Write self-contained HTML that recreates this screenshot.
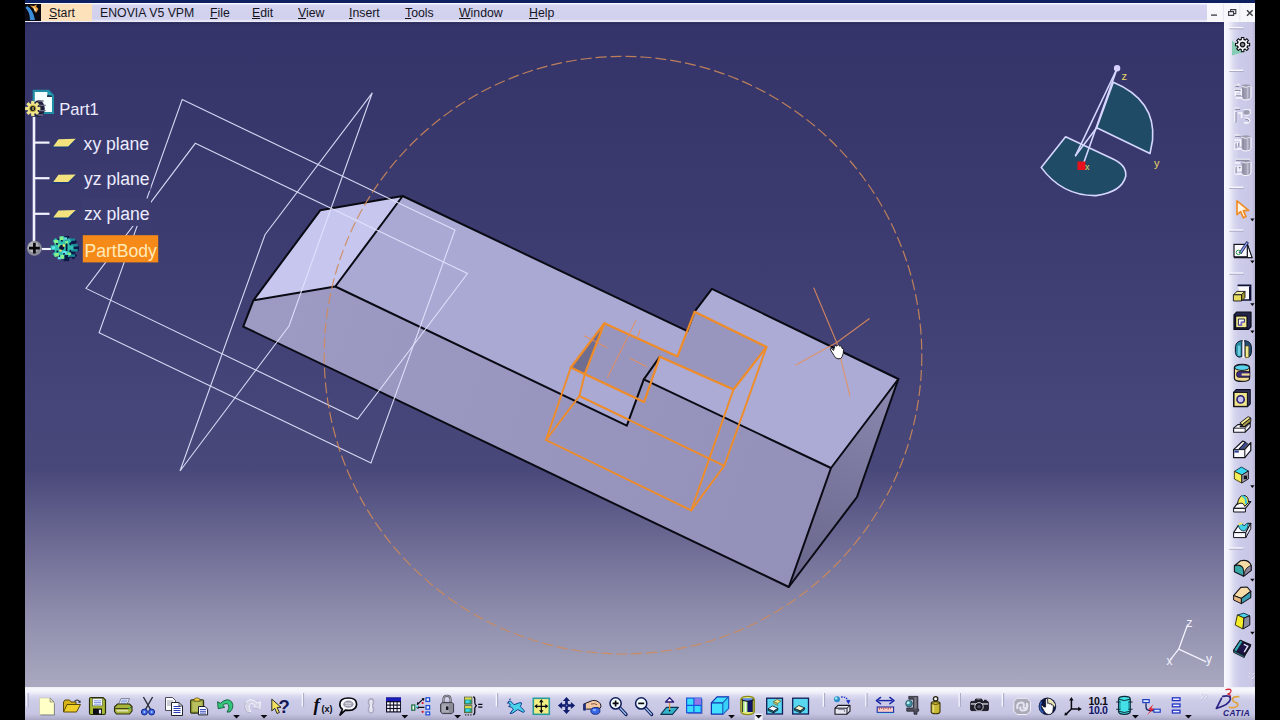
<!DOCTYPE html>
<html><head><meta charset="utf-8"><title>CATIA V5 - Part1</title>
<style>
html,body{margin:0;padding:0;background:#000;}
body{width:1280px;height:720px;position:relative;overflow:hidden;font-family:"Liberation Sans",sans-serif;}
#topstrip{position:absolute;left:25px;top:0;width:1230px;height:3px;background:#0f2060;}
#menubar{position:absolute;left:25px;top:3px;width:1230px;height:20px;background:linear-gradient(#f6f6ff 0,#f6f6ff 1px,#d4d4f0 2px,#d1d1ed 16px,#e8e8f6 18px,#f4f4fc 20px);box-sizing:border-box;}
#wc{position:absolute;left:1182px;top:0;width:48px;height:20px;background:#f7f7fc;}
#menubar .hl{position:absolute;left:16px;top:1px;width:51px;height:17px;background:#fde1ba;}
#menubar span{position:absolute;top:2px;font-size:12.3px;line-height:16px;color:#15151f;white-space:nowrap;}
#menubar u{text-decoration-thickness:1px;text-underline-offset:1px;}
svg{position:absolute;left:0;top:0;}
</style></head><body>
<div id="topstrip"></div>
<div id="menubar"><div class="hl"></div>
<span style="left:24px"><u>S</u>tart</span>
<span style="left:75px">ENOVIA V5 VPM</span>
<span style="left:185px"><u>F</u>ile</span>
<span style="left:227px"><u>E</u>dit</span>
<span style="left:273px"><u>V</u>iew</span>
<span style="left:324px"><u>I</u>nsert</span>
<span style="left:380px"><u>T</u>ools</span>
<span style="left:434px"><u>W</u>indow</span>
<span style="left:504px"><u>H</u>elp</span>
<div id="wc"></div>
</div>
<svg id="main" width="1280" height="720" viewBox="0 0 1280 720">
<defs>
<linearGradient id="bg" x1="0" y1="22" x2="0" y2="687" gradientUnits="userSpaceOnUse">
<stop offset="0" stop-color="#34346a"/>
<stop offset="0.3" stop-color="#3c3b6f"/>
<stop offset="0.568" stop-color="#464579"/>
<stop offset="0.674" stop-color="#49487a"/>
<stop offset="0.786" stop-color="#6e6c95"/>
<stop offset="0.895" stop-color="#8f8ead"/>
<stop offset="1" stop-color="#a9a9c0"/>
</linearGradient>
<linearGradient id="gfront" x1="243" y1="326" x2="830" y2="520" gradientUnits="userSpaceOnUse">
<stop offset="0" stop-color="#9d9bc4"/><stop offset="1" stop-color="#9391ba"/>
</linearGradient>
<linearGradient id="gright" x1="880" y1="390" x2="800" y2="580" gradientUnits="userSpaceOnUse">
<stop offset="0" stop-color="#8886ac"/><stop offset="1" stop-color="#69678c"/>
</linearGradient>
</defs>
<!-- viewport -->
<rect x="25" y="22" width="1199" height="665" fill="url(#bg)"/>
<g id="model" stroke-linejoin="round" stroke-linecap="round">
<!-- front face -->
<polygon points="243.2,326.6 253.4,300.3 335.3,286.5 626.8,425.7 643.8,379.3 831,468 788.8,587" fill="url(#gfront)"/>
<!-- right face -->
<polygon points="898.4,379 831,468 788.8,587 857,497" fill="url(#gright)"/>
<!-- top low -->
<polygon points="402.7,196 687.4,331.2 694.6,311.7 711.9,288.8 760,320 700,400 643.8,379.3 626.8,425.7 335.3,286.5" fill="#a9a9d4"/>
<!-- top high -->
<polygon points="711.9,288.8 898.4,379 831,468 643.8,379.3 659.9,356.7 677.4,356.6 694.6,311.7" fill="#ababd6"/>
<!-- chamfer -->
<polygon points="320.2,210.3 402.7,196 335.3,286.5 253.4,300.3" fill="#c6c6ef"/>
<!-- pocket interior -->
<polygon points="604.3,323.3 677.4,356.6 659.9,356.7 644.1,402 585,373.3" fill="#9896be"/>
<polygon points="677.4,356.6 694.6,311.7 766.5,347 733.5,389.5 659.9,356.7" fill="#9896be"/>
<polygon points="604.3,323.3 585,373.3 570.8,367.5" fill="#6f6d90"/>
<!-- black edges -->
<g fill="none" stroke="#0a0a14" stroke-width="2">
<polyline points="402.7,196 687.4,331.2 694.6,311.7 711.9,288.8 898.4,379 857,497 788.8,587 243.2,326.6 253.4,300.3 320.2,210.3 402.7,196 335.3,286.5 253.4,300.3"/>
<polyline points="335.3,286.5 626.8,425.7 643.8,379.3 659.9,356.7"/>
<polyline points="643.8,379.3 831,468 898.4,379"/>
<line x1="831" y1="468" x2="788.8" y2="587"/>
</g>
</g>
<!-- reference planes -->
<g fill="none" stroke="#e4e4ff" stroke-width="1.1" opacity="0.92">
<polygon points="182.2,99.5 455,230 371,463 99.1,332.7"/>
<polygon points="195.3,143.3 467.5,273.5 357.6,419 86,288.4"/>
<polygon points="372.3,92.8 265,234.7 180,471 289,326"/>
</g>
<!-- rotation circle -->
<circle cx="623" cy="355.2" r="298.8" fill="none" stroke="#d08a58" stroke-width="1.2" stroke-dasharray="11 4" opacity="0.88"/>
<!-- spec tree -->
<g id="tree">
<rect x="81" y="128" width="70.5" height="27.5" fill="#3a396d"/>
<rect x="81" y="163.2" width="69.5" height="27.5" fill="#3b3a6e"/>
<rect x="81" y="198.4" width="70" height="27.5" fill="#3d3c70"/>
<g stroke="#f2f2ff" fill="none">
<line x1="34" y1="117" x2="34" y2="242" stroke-width="2.6"/>
<line x1="35" y1="142.6" x2="49.5" y2="142.6" stroke-width="2.2"/>
<line x1="35" y1="178.2" x2="49.5" y2="178.2" stroke-width="2.2"/>
<line x1="35" y1="213.8" x2="49.5" y2="213.8" stroke-width="2.2"/>
<line x1="42" y1="249" x2="51" y2="249" stroke-width="2.1"/>
</g>
<g id="pl">
<polygon points="58,139.4 76.4,139 68.8,148 51.4,148" fill="#1c3a78"/>
<polygon points="58.4,139.2 75.8,138.8 68.2,146.4 53.2,146.4" fill="#f3e27e"/>
</g>
<use href="#pl" y="35.6"/>
<use href="#pl" y="71.2"/>
<!-- Part1 icon -->
<g>
<path d="M32.6,89.8 L49,89.8 L54,95 L54,114 L32.6,114 Z" fill="#1f8ea4"/>
<path d="M34.8,92 L47.4,92 L47.4,96.6 L52,96.6 L52,112 L34.8,112 Z" fill="#f4feff"/>
<path d="M47,95.4 H52 V96.8 H47 Z" fill="#101028"/>
<path d="M47.6,91.6 L52.4,96.2 L49.6,94.8 Z" fill="#3cc4dc"/>
<ellipse cx="38.6" cy="108.6" rx="6.2" ry="8.4" fill="#1e1e3c"/>
<path d="M38,101 H43.6 M39,105.4 H45.6 M39,110.6 H45.6 M38,115 H43" stroke="#6c6c84" stroke-width="1.4"/>
<g transform="translate(32.75,108.5)">
<g fill="#efe48c">
<rect x="-1.6" y="-7.6" width="3.2" height="15.2"/>
<rect x="-7.6" y="-1.6" width="15.2" height="3.2"/>
<rect x="-1.6" y="-7.6" width="3.2" height="15.2" transform="rotate(45)"/>
<rect x="-1.6" y="-7.6" width="3.2" height="15.2" transform="rotate(-45)"/>
<circle r="5.2"/>
</g>
<circle r="3.5" fill="#b8a838"/>
<circle r="2.5" fill="#14142c"/>
<rect x="-0.6" y="-1.6" width="1.8" height="3.2" fill="#9c9040"/>
</g>
</g>
<!-- plus -->
<circle cx="34.4" cy="248.2" r="7.5" fill="#8c8c98"/>
<circle cx="33.4" cy="247" r="5.4" fill="#c4c4cc" opacity="0.7"/>
<path d="M29,248.2 H39.8 M34.4,242.8 V253.6" stroke="#06060a" stroke-width="2.7" fill="none"/>
<!-- partbody gear -->
<g transform="translate(64.1,248)">
<g fill="#0c1a48" transform="translate(2.2,0.6)">
<circle r="9.8"/>
<rect x="-2.8" y="-12.6" width="5.6" height="25.2"/>
<rect x="-12.6" y="-2.8" width="25.2" height="5.6"/>
<rect x="-2.8" y="-12.6" width="5.6" height="25.2" transform="rotate(45)"/>
<rect x="-2.8" y="-12.6" width="5.6" height="25.2" transform="rotate(-45)"/>
</g>
<g fill="#1a8a98"><rect x="5" y="-9.6" width="6" height="2.4"/><rect x="7" y="-4" width="6.6" height="2.6"/><rect x="7" y="1" width="6.6" height="2.6"/><rect x="5" y="6.4" width="6" height="2.4"/></g>
<g fill="#2fc0b0" transform="translate(-2,-0.4)">
<circle r="8"/>
<rect x="-2.2" y="-11.4" width="4.4" height="22.8"/>
<rect x="-11.4" y="-2.2" width="22.8" height="4.4"/>
<rect x="-2.2" y="-11.4" width="4.4" height="22.8" transform="rotate(45)"/>
<rect x="-2.2" y="-11.4" width="4.4" height="22.8" transform="rotate(-45)"/>
</g>
<g fill="#86f08c"><rect x="-10" y="-8" width="4" height="3.4"/><rect x="-4.6" y="-11.4" width="4" height="3.4"/><rect x="-9.6" y="5" width="4.4" height="3.6"/><rect x="-6" y="-3.6" width="3" height="3"/><rect x="-3.6" y="7" width="3.6" height="3.6"/><rect x="1" y="-7" width="3" height="2.6"/><rect x="3.4" y="4.6" width="3.4" height="2.4"/></g>
<g fill="#64e4f0"><rect x="-1.6" y="3" width="4.4" height="3.4"/><rect x="-12" y="-1.6" width="3" height="3"/><rect x="0" y="-10.6" width="3" height="2.4"/><rect x="-6.4" y="9" width="3" height="2.4"/></g>
<g fill="#0c1438"><circle cx="-2.4" cy="-0.6" r="2.5"/><rect x="1.6" y="-4.4" width="1.8" height="7.6"/><rect x="-8" y="-5" width="1.8" height="1.8"/><rect x="-7.6" y="2.6" width="1.8" height="1.8"/><rect x="-1" y="5" width="1.8" height="1.6"/><rect x="2.4" y="7" width="1.6" height="1.6"/><rect x="-3" y="-8" width="1.6" height="1.6"/></g>
<rect x="-1.4" y="-3.8" width="2.2" height="2.6" fill="#e8e060"/><rect x="-4.8" y="1.6" width="2.4" height="2" fill="#e8e060"/>
</g>
<!-- PartBody highlight -->
<rect x="82.8" y="235.2" width="75.4" height="27.2" fill="#f58a18"/>
<g font-family="Liberation Sans, sans-serif" font-size="17.6" fill="#ececff">
<text x="59.2" y="115" font-size="16.6">Part1</text>
<text x="83.6" y="150">xy plane</text>
<text x="84" y="185.2">yz plane</text>
<text x="84" y="220.4">zx plane</text>
<text x="84.4" y="256.6" fill="#ffe9b8">PartBody</text>
</g>
</g>
<!-- pocket highlight -->
<g fill="none" stroke="#f08c28" stroke-linecap="round" stroke-linejoin="round">
<g stroke-width="2.2">
<polyline points="604.3,323.3 677.4,356.6 694.6,311.7 766.5,347 733.5,389.5 659.9,356.7 644.1,402 570.8,367.5 604.3,323.3"/>
<line x1="604.3" y1="323.3" x2="585" y2="373.3"/>
</g>
<g stroke-width="1.9">
<polyline points="585,373.3 579.4,396 546,440 691.2,510.4 724.3,465.8 579.4,396"/>
<line x1="570.8" y1="367.5" x2="546" y2="440"/>
<line x1="733.5" y1="389.5" x2="691.2" y2="510.4"/>
<line x1="766.5" y1="347" x2="724.3" y2="465.8"/>
<line x1="579.4" y1="396" x2="628.5" y2="419.5"/>
</g>
<g stroke-width="1.1" opacity="0.85" stroke="#e8905a">
<line x1="584.2" y1="335.8" x2="606.7" y2="347.5"/>
<line x1="635.8" y1="320.8" x2="607.5" y2="377.5"/>
<line x1="630" y1="358.3" x2="646.7" y2="366.7"/>
<line x1="640" y1="330" x2="638" y2="337"/>
<polyline points="813.8,288 836.7,342.5 850,395.8"/>
<polyline points="795.8,365 836.7,342.5 869.2,318.7"/>
</g>
</g>
<!-- hand cursor -->
<g transform="translate(830,344)">
<path d="M3.5,6.5 L1,4.2 Q-0.3,4.6 0.6,6 L3.8,11.2 Q5.2,14.6 8,14.8 L10.6,14.6 Q12.6,13 13.2,9.5 L13.6,5.2 Q13.2,3.6 12,4.4 L11.6,2.4 Q10.6,1.2 9.8,2.4 L9.4,1.4 Q8.2,0.2 7.4,1.6 L7,2.2 Q5.6,0.6 4.8,2.2 Z" fill="#fff" stroke="#111" stroke-width="0.9" stroke-linejoin="round"/>
</g>
<!-- compass -->
<g stroke="#d6d6ff" stroke-width="1.6" stroke-linejoin="round" stroke-linecap="round">
<path d="M1065.6,136.7 L1113,159 Q1126.5,165 1125.8,176 Q1122,192 1096,195.6 Q1062,196 1041.2,167.4 Z" fill="#1f4b67"/>
<path d="M1113.3,82.2 Q1156,100 1152.6,140 L1150,153.5 L1096.7,127.8 Z" fill="#1f4b67"/>
<line x1="1117.1" y1="68.5" x2="1075.6" y2="155.6" />
<line x1="1117.1" y1="68.5" x2="1083.5" y2="163.5"/>
<line x1="1096.7" y1="127.8" x2="1075.6" y2="155.6"/>
</g>
<circle cx="1117.1" cy="68.3" r="3.2" fill="#d8d0ff"/>
<rect x="1077.5" y="161.5" width="8" height="8.5" fill="#e8101c"/>
<text x="1121.5" y="79.5" font-size="11" fill="#e6d860" font-family="Liberation Sans, sans-serif">z</text>
<text x="1154" y="166.5" font-size="11" fill="#e6d860" font-family="Liberation Sans, sans-serif">y</text>
<text x="1085" y="169.5" font-size="9" fill="#e6d860" font-family="Liberation Sans, sans-serif">x</text>
<!-- small axis -->
<g stroke="#f2f2ff" stroke-width="1.3" stroke-linecap="round">
<line x1="1178.7" y1="649.2" x2="1187.5" y2="625"/>
<line x1="1178.7" y1="649.2" x2="1205.8" y2="661.7"/>
<line x1="1178.7" y1="649.2" x2="1170.8" y2="659.2"/>
</g>
<g font-size="12" fill="#f2f2ff" font-family="Liberation Sans, sans-serif">
<text x="1186.5" y="627">z</text>
<text x="1206" y="663">y</text>
<text x="1166.5" y="665">x</text>
</g>
<!-- window controls -->
<g stroke="#3a3a44" fill="none" stroke-width="1.3">
<path d="M1211,15.1 H1217"/>
<path d="M1228.6,11.6 H1233.6 V15.4 H1228.6 Z M1230.6,11.4 V9.6 H1235.8 V13.6 H1233.8" stroke-width="1.1"/>
<path d="M1247,10.2 L1252.6,15.8 M1252.6,10.2 L1247,15.8" stroke-width="1.4"/>
</g>
<path d="M1223.5,4 V21 M1239.8,4 V21" stroke="#e6e6f0" stroke-width="1"/>
<rect x="25" y="23" width="1199" height="1.2" fill="#2c2c58" opacity="0.8"/>
<!-- app icon -->
<g>
<rect x="25" y="4" width="16" height="17" fill="#0a0a10"/>
<path d="M27,6 Q33,9 35,20 L30,20 Q30,12 25.6,8 Z" fill="#3a8cd8"/>
<path d="M30,5.6 Q34,8 36,13 L38.4,9 L36,6.4 L37,4.6 L33.6,6 Z" fill="#f0a040"/>
<path d="M33,6.6 L36,9.6 L35,12 Z" fill="#fff0c0"/>
</g>

<!-- right toolbar -->
<defs>
<linearGradient id="tbr" x1="1224" y1="0" x2="1255" y2="0" gradientUnits="userSpaceOnUse">
<stop offset="0" stop-color="#f8f8fe"/><stop offset="0.16" stop-color="#f0f0fa"/><stop offset="0.34" stop-color="#d6d6ee"/><stop offset="0.5" stop-color="#ccccea"/><stop offset="0.9" stop-color="#c8c8e6"/><stop offset="1" stop-color="#b4b4d2"/>
</linearGradient>
<g id="grip"><rect x="1228.6" y="0" width="14.6" height="1.4" fill="#f8f8ff"/><rect x="1229.2" y="1.4" width="14.6" height="0.9" fill="#a8a8c6"/></g>
<path id="dr" d="M-2.2,-1.2 H2.2 L0,1.6 Z" fill="#0a0a10"/>
<g id="dis" >
<path d="M9,4.6 Q9,2.8 13.4,2.8 Q17.8,2.8 17.8,4.6 V16 Q17.8,18 13.4,18 Q9,18 9,16 Z" fill="#9c9cb0"/>
<path d="M9.4,5 Q13.4,7 17.4,5" fill="none" stroke="#f4f4fc" stroke-width="0.9"/>
<path d="M15,6.6 V17.4" stroke="#c0c0d2" stroke-width="1.8"/><path d="M10.6,6.6 V17.4" stroke="#8c8ca2" stroke-width="1.4"/>
<path d="M9,16 Q9,18.6 13.4,18.6 Q17.8,18.6 18.4,16 V5" fill="none" stroke="#f8f8ff" stroke-width="1"/>
</g>
</defs>
<rect x="1224" y="22" width="31" height="668" fill="url(#tbr)"/>
<use href="#grip" y="27"/><use href="#grip" y="69.6"/><use href="#grip" y="186.6"/><use href="#grip" y="229.4"/><use href="#grip" y="272.4"/><use href="#grip" y="547.4"/>
<!-- workbench gear -->
<polygon points="1232,40.6 1232,55.6 1245.4,51.4" fill="#86ccb4"/>
<g transform="translate(1242.6,44.6)">
<g fill="#0c0c12">
<circle r="6"/>
<rect x="-1.7" y="-7.6" width="3.4" height="15.2"/><rect x="-7.6" y="-1.7" width="15.2" height="3.4"/>
<rect x="-1.7" y="-7.6" width="3.4" height="15.2" transform="rotate(45)"/><rect x="-1.7" y="-7.6" width="3.4" height="15.2" transform="rotate(-45)"/>
</g>
<g fill="#f6f6fc"><circle r="4.6"/>
<rect x="-0.8" y="-6.5" width="1.6" height="13"/><rect x="-6.5" y="-0.8" width="13" height="1.6"/>
<rect x="-0.8" y="-6.5" width="1.6" height="13" transform="rotate(45)"/><rect x="-0.8" y="-6.5" width="1.6" height="13" transform="rotate(-45)"/></g>
<circle r="2.8" fill="#0c0c12"/><circle r="1.6" fill="#8c8c98"/>
</g>
<!-- disabled icons -->
<g transform="translate(1232.6,81.4)"><use href="#dis"/><path d="M2,4 H6 V2 M1.6,8 H8.6 V13.6 H2.6 V10.4 H7 M3,16.6 H10" fill="none" stroke="#f8f8ff" stroke-width="1.5"/><path d="M2.6,5 H6.6 M2.2,9 H8 M3.4,14.4 H8.6" fill="none" stroke="#8c8ca4" stroke-width="1.1"/></g>
<g transform="translate(1232.6,106)"><path d="M2,2.4 H7 M2.4,5 V16 M5.4,7 H9 V12 M11,4 H17 Q18.6,8 15,9 H12 M12,12 Q17,12 17,15 Q15.6,18 11.6,16.6" fill="none" stroke="#f8f8ff" stroke-width="1.6"/><path d="M2.6,3.4 H7.4 M3.4,6 V16.6 M11.4,5 H16.6 M12.6,13 Q16.4,13.4 16,15.6" fill="none" stroke="#8c8ca4" stroke-width="1.1"/><path d="M11,5 Q14,3.6 17,5 V8 Q14,9.6 11,8 Z" fill="#9c9cb0"/></g>
<g transform="translate(1232.6,132.4)"><use href="#dis"/><path d="M2,3 H8 M4,1.6 L5,5 M2,7.6 H8 V14 M2.4,10 V16.6 H9 M5,9.6 V13.6" fill="none" stroke="#f8f8ff" stroke-width="1.5"/><path d="M2.6,4 H8.4 M3.4,11 V16 M6,10.6 V14" fill="none" stroke="#8c8ca4" stroke-width="1.1"/></g>
<g transform="translate(1232.6,157)"><use href="#dis"/><path d="M3,2.4 H17 M2,6 H7.6 M2.6,9 V17 H9 M5.4,9.6 H8.4 V13.4 H5.4 Z" fill="none" stroke="#f8f8ff" stroke-width="1.5"/><path d="M3.4,3.4 H16.6 M3.4,10 V16.4 M6.2,10.4 H8" fill="none" stroke="#8c8ca4" stroke-width="1.1"/></g>
<!-- select arrow -->
<g transform="translate(1236,200)"><path d="M1,0.8 L1,14.6 L4.6,11.6 L7.4,17.8 L10,16.6 L7.4,10.6 L12.6,10.4 Z" fill="#fff4e4" stroke="#f08c28" stroke-width="1.7" stroke-linejoin="round"/></g>
<use href="#dr" x="1252.4" y="219.6"/>
<!-- sketch -->
<g transform="translate(1233,240)"><rect x="1" y="4.4" width="13.4" height="12.4" fill="#fafaff" stroke="#14141c" stroke-width="1.2"/><path d="M1,17.6 H19 L14.4,4.4" fill="none" stroke="#14141c" stroke-width="1.2"/><path d="M14.4,4.4 L19,17.6 H14.4 Z" fill="#fafaff" stroke="#14141c" stroke-width="1"/><path d="M6,13 L13.6,1.6 L15.4,2.8 L8,14" fill="#8c9ce8" stroke="#181c50" stroke-width="0.9"/><circle cx="5.4" cy="12.4" r="2.2" fill="none" stroke="#2c9c4c" stroke-width="1"/></g>
<use href="#dr" x="1252.4" y="261.6"/>
<!-- pad -->
<g transform="translate(1232.6,284.4)"><path d="M5,1 H18 V15.6 H9" fill="#fafaff" stroke="#101038" stroke-width="1.6"/><path d="M18,1 V15.6 H16.4 V2.6 Z" fill="#101038"/><path d="M0.8,10.4 L4.4,7 H12.4 L9,10.4 Z" fill="#f4ec9c" stroke="#14141c" stroke-width="0.9" stroke-linejoin="round"/><path d="M0.8,10.4 H9 V16.6 H0.8 Z" fill="#e8dc60" stroke="#14141c" stroke-width="0.9"/><path d="M9,10.4 L12.4,7 V13.2 L9,16.6 Z" fill="#a89c30" stroke="#14141c" stroke-width="0.9" stroke-linejoin="round"/></g>
<use href="#dr" x="1252.4" y="304.4"/>
<!-- pocket -->
<g transform="translate(1233,311.4)"><path d="M1,3.4 L3.6,0.8 H18 V15.4 L15.4,18 H1 Z" fill="#24244c" stroke="#0a0a18" stroke-width="1.2" stroke-linejoin="round"/><rect x="2.6" y="4.6" width="11.4" height="11.8" fill="#f0e890" stroke="#0a0a18" stroke-width="1.2"/><path d="M5.4,7.6 H11.4 V10.8 H8.4 V13.8 H5.4 Z" fill="#f8f8ff" stroke="#141440" stroke-width="0.9"/><path d="M5.4,13.8 H8.4 V10.8 H11.4" fill="none" stroke="#7c68c0" stroke-width="1.6"/></g>
<use href="#dr" x="1252.4" y="331.6"/>
<!-- shaft -->
<g transform="translate(1233.4,339.6)"><path d="M9.6,1 Q3,1 2,7 V13 Q2.4,17 5.6,17.6 L8.4,17 V2 Z" fill="#2c8ca8" stroke="#0c1c2c" stroke-width="1"/><path d="M10.4,1 Q17,1 18,7 V13 Q17.6,17 14.4,17.6 L11.6,17 V2 Z" fill="#284c74" stroke="#0c1c2c" stroke-width="1"/><rect x="12" y="6.4" width="3.4" height="11.6" fill="#f0e88c" stroke="#50480c" stroke-width="0.6"/><rect x="4.4" y="6" width="2.6" height="10" fill="#6cd0e0"/><path d="M10,0 V18.4" stroke="#f0f0fc" stroke-width="1.4"/></g>
<!-- groove -->
<g transform="translate(1233.6,363.6)"><path d="M0.8,4 Q0.8,0.8 8.4,0.8 Q16,0.8 16,4 V14.6 Q16,17.8 8.4,17.8 Q0.8,17.8 0.8,14.6 Z" fill="#f0dc8c" stroke="#141420" stroke-width="1.2"/><ellipse cx="8.4" cy="4" rx="7.2" ry="2.8" fill="#58d4ec" stroke="#141420" stroke-width="1"/><path d="M5,8 H16 V13.6 H5 Q3,13.6 3,10.8 Q3,8 5,8 Z" fill="#3c2c84" stroke="#141420" stroke-width="0.9"/><path d="M8,9.8 H16 V12 H8 Z" fill="#f0dc8c"/></g>
<!-- hole -->
<g transform="translate(1232.8,388.8)"><path d="M0.8,3.6 L3.4,0.8 H17.4 V15 L14.8,17.8 H0.8 Z" fill="#34345c" stroke="#0c0c20" stroke-width="1.1" stroke-linejoin="round"/><rect x="1.2" y="3.6" width="13.4" height="14" fill="#f0e48c" stroke="#14141c" stroke-width="1.1"/><circle cx="7.8" cy="10.6" r="3.6" fill="#c8c0f0" stroke="#241c6c" stroke-width="1.6"/></g>
<!-- rib -->
<g transform="translate(1232.8,415.6)"><path d="M7,7.4 L15.4,1 L18,2.4 L9.6,9 Z" fill="#f0e48c" stroke="#14141c" stroke-width="0.9" stroke-linejoin="round"/><path d="M9.6,9 L18,2.4 V6 L9.6,12.4 Z" fill="#a89c40" stroke="#14141c" stroke-width="0.9" stroke-linejoin="round"/><path d="M0.8,12.6 L5,9 H9.4 L7.4,11 H12.4 L17.4,6.6 V11.4 L12.4,16.6 H0.8 Z" fill="#fafaff" stroke="#14141c" stroke-width="1.1" stroke-linejoin="round"/><path d="M0.8,12.6 H12.4 V16.6 M12.4,12.6 L17.4,7.6" fill="none" stroke="#14141c" stroke-width="0.9"/></g>
<!-- slot -->
<g transform="translate(1232.8,440)"><path d="M0.8,9.6 L10,1 L12.6,2.4 L6.4,9 H12 L18,2.6 V10.4 L12,17.6 H0.8 Z" fill="#fafaff" stroke="#14141c" stroke-width="1.2" stroke-linejoin="round"/><path d="M6.4,9 L12.6,2.4 L15,3.8 L9.4,9.6 Z" fill="#3c4c9c" stroke="#14141c" stroke-width="0.8"/><path d="M0.8,9.6 H12 V17.6 M12,9.6 L18,2.6" fill="none" stroke="#14141c" stroke-width="1"/><path d="M1.6,10.4 H6 V12.6 H1.6 Z" fill="#2c3c8c"/></g>
<!-- solid combine -->
<g transform="translate(1233.4,466)"><path d="M1,5.4 L8,1 L15,5 L8.4,9 Z" fill="#38d8f0" stroke="#0c3048" stroke-width="0.9" stroke-linejoin="round"/><path d="M1,5.4 L8.4,9 V17 L1,13 Z" fill="#f4ec58" stroke="#3c3808" stroke-width="0.9" stroke-linejoin="round"/><path d="M8.4,9 L15,5 V13 L8.4,17 Z" fill="#9c9cac" stroke="#141420" stroke-width="0.9" stroke-linejoin="round"/><rect x="10.4" y="9.6" width="3.2" height="3.6" fill="#101018"/></g>
<use href="#dr" x="1252.4" y="486.4"/>
<!-- multi-sections solid -->
<g transform="translate(1232.8,494)"><path d="M0.8,14.4 L6,7.6 H18 L12.6,14.4 Z" fill="#fafaff" stroke="#14141c" stroke-width="1.1" stroke-linejoin="round"/><path d="M0.8,14.4 H12.6 V18 H0.8 Z" fill="#fafaff" stroke="#14141c" stroke-width="1"/><path d="M4.6,10.4 Q6,1 11,1.4 Q16,2 15.6,8.4 L12,12.4 Q10,7 4.6,10.4 Z" fill="#f4ec50" stroke="#14141c" stroke-width="1" stroke-linejoin="round"/><path d="M9,2 Q14,3 13,10" fill="none" stroke="#38c8e0" stroke-width="2"/></g>
<!-- removed multi-sections -->
<g transform="translate(1232.8,520.6)"><path d="M0.8,12 L5.4,5 H8 Q9,9 12,7.6 Q14.4,5.4 15,3 L18,2.6 L13,12 Z" fill="#fafaff" stroke="#14141c" stroke-width="1.1" stroke-linejoin="round"/><path d="M0.8,12 H13 V17 H0.8 Z" fill="#fafaff" stroke="#14141c" stroke-width="1"/><path d="M13,12 L18,2.6 V8 L13,17 Z" fill="#e4e4f0" stroke="#14141c" stroke-width="1" stroke-linejoin="round"/><path d="M5.6,5 Q7,1.6 9.6,3.4 Q11,7 13.6,3 L15.6,2.4 Q15,9 11.4,10.4 Q7,10.6 5.6,5 Z" fill="#44d0e4" stroke="#0c3c54" stroke-width="0.9"/><path d="M6,4.4 Q7.6,2 9.4,3.6" fill="none" stroke="#f4ec50" stroke-width="1.6"/></g>
<!-- fillet -->
<g transform="translate(1233.6,559.4)"><path d="M0.8,6.4 L7,1.4 Q15,-0.4 17.6,6 V11 L10,16.8 Z" fill="#f4dca4" stroke="#14141c" stroke-width="1.1" stroke-linejoin="round"/><path d="M0.8,6.4 Q6,4.6 9,8 Q10.6,11 10,16.8 L0.8,12.4 Z" fill="#38a8a8" stroke="#14141c" stroke-width="1.1" stroke-linejoin="round"/><path d="M10,16.8 Q11,8 17.6,6 V11 Z" fill="#8c8498" stroke="#14141c" stroke-width="0.9" stroke-linejoin="round"/></g>
<use href="#dr" x="1252.4" y="580"/>
<!-- chamfer -->
<g transform="translate(1232.8,586)"><path d="M0.8,9.6 L8,1.4 L14.4,1 L18,5.4 L8.6,12.4 Z" fill="#f8dca8" stroke="#14141c" stroke-width="1.1" stroke-linejoin="round"/><path d="M0.8,9.6 L8.6,12.4 V17.6 L0.8,14 Z" fill="#e8b880" stroke="#14141c" stroke-width="1" stroke-linejoin="round"/><path d="M8.6,12.4 L18,5.4 V11.6 L8.6,17.6 Z" fill="#3c9cb0" stroke="#14141c" stroke-width="1.1" stroke-linejoin="round"/></g>
<!-- draft -->
<g transform="translate(1234.4,612.4)"><path d="M3,2.6 L9.4,0.8 L15.4,3.4 L9.6,5.6 Z" fill="#48d0e8" stroke="#0c3048" stroke-width="0.9" stroke-linejoin="round"/><path d="M3,2.6 L9.6,5.6 L8.6,16.6 L0.8,12.6 Z" fill="#f4ec28" stroke="#3c3808" stroke-width="1" stroke-linejoin="round"/><path d="M9.6,5.6 L15.4,3.4 V12.6 L8.6,16.6 Z" fill="#8c8ca0" stroke="#141420" stroke-width="1" stroke-linejoin="round"/></g>
<use href="#dr" x="1252.4" y="633"/>
<!-- shell -->
<g transform="translate(1232.8,639.4)"><path d="M0.8,11 L7.4,1 L18,5.4 L11.4,16.4 Z" fill="#1c1444" stroke="#14141c" stroke-width="1.2" stroke-linejoin="round"/><path d="M0.8,11 L7.4,1 L10,2.2 L3.6,12.4 Z" fill="#34a8b4" stroke="#14141c" stroke-width="0.8"/><path d="M0.8,11 L11.4,16.4 L11.4,18.2 L0.8,13 Z" fill="#2c7c8c" stroke="#14141c" stroke-width="0.8"/><path d="M11,5 L15,6.8 L11.4,12.8" fill="none" stroke="#e8e8fc" stroke-width="1.3"/><path d="M11.4,16.4 L18,5.4 V7.4 L11.4,18.2 Z" fill="#14141c"/></g>
<!-- chevron down -->
<path d="M1249,673 L1251.8,675.8 L1254.6,673 M1249,676.4 L1251.8,679.2 L1254.6,676.4" fill="none" stroke="#f4f4ff" stroke-width="1"/>
<path d="M1249.4,673.6 L1252.2,676.4 L1255,673.6 M1249.4,677 L1252.2,679.8 L1255,677" fill="none" stroke="#a0a0bc" stroke-width="0.6"/>

<!-- bottom toolbar -->
<defs>
<linearGradient id="tbb" x1="0" y1="687" x2="0" y2="720" gradientUnits="userSpaceOnUse">
<stop offset="0" stop-color="#eeeef8"/><stop offset="0.06" stop-color="#f7f7fd"/><stop offset="0.16" stop-color="#f0f0fa"/><stop offset="0.27" stop-color="#dadaf0"/><stop offset="0.4" stop-color="#cdcde9"/><stop offset="0.8" stop-color="#c6c6e4"/><stop offset="0.9" stop-color="#b9b9d6"/><stop offset="1" stop-color="#a8a8c6"/>
</linearGradient>
<path id="dd" d="M-3.4,-1.8 H3.4 L0,1.8 Z" fill="#0a0a10"/>
<g id="sep"><rect x="-0.8" y="692.5" width="1.4" height="14" fill="#f6f6ff"/><rect x="0.6" y="693" width="1" height="14" fill="#a8a8c4"/></g>
</defs>
<rect x="25" y="687" width="1230" height="33" fill="url(#tbb)"/>
<g id="bicons">
<use href="#sep" x="27"/><use href="#sep" x="302.5"/><use href="#sep" x="496.5"/><use href="#sep" x="823.5"/><use href="#sep" x="866"/><use href="#sep" x="959.3"/><use href="#sep" x="1002.5"/>
<!-- new -->
<g transform="translate(39.5,698)"><path d="M1,1 H11 L15.5,5.5 V17.5 H1 Z" fill="#7a7a88"/><path d="M0,0 H10.5 L14.5,4 V16.5 H0 Z" fill="#ffffc8" stroke="#b8b8a0" stroke-width="0.5"/><path d="M10.5,0 V4 H14.5 Z" fill="#e8e8b0" stroke="#555" stroke-width="0.5"/></g>
<!-- open -->
<g transform="translate(63,698.5)"><path d="M0.5,13.5 V3.5 L2,1.5 H6.5 L8,3.5 H13 V6" fill="#d8b418" stroke="#5a4a08" stroke-width="1"/><path d="M0.5,13.5 L4,6 H17.5 L13.5,13.5 Z" fill="#f0d028" stroke="#5a4a08" stroke-width="1"/><path d="M11.5,3 Q14.5,0 16.5,3.2" fill="none" stroke="#20242c" stroke-width="1.1"/><path d="M15,3.8 L17.6,4.6 L17.4,1.8 Z" fill="#20242c"/></g>
<!-- save -->
<g transform="translate(89.5,697.5)"><path d="M0,1.5 Q0,0 1.5,0 H13.5 L16,2.5 V15.5 Q16,17 14.5,17 H1.5 Q0,17 0,15.5 Z" fill="#a9b834" stroke="#2a3008" stroke-width="1.2"/><rect x="3.2" y="1.2" width="9.6" height="7.2" fill="#f4f4ff" stroke="#404858" stroke-width="0.5"/><path d="M4.5,3.3 H11.5 M4.5,5 H11.5 M4.5,6.7 H11.5" stroke="#6a8ae0" stroke-width="0.8"/><rect x="3.5" y="11" width="9" height="6" fill="#0c0c14"/><rect x="9.4" y="12.2" width="2.2" height="3.8" fill="#e8e8f0"/></g>
<!-- print -->
<g transform="translate(114,698)"><path d="M4.5,6.5 L7,0.6 H15.5 L13,6.5 Z" fill="#f6f6ff" stroke="#50586a" stroke-width="0.7"/><path d="M7.5,2.2 H13.6 M6.9,3.7 H13 M6.3,5.2 H12.4" stroke="#6a8ae0" stroke-width="0.8"/><path d="M0.5,9 L3.5,6 H15.5 L18,8.5 V13 L15.5,16 H2.5 L0.5,13.5 Z" fill="#a8b43c" stroke="#2c3010" stroke-width="1.1"/><path d="M1,10.6 H15.4 L18,8.6" fill="none" stroke="#2c3010" stroke-width="0.9"/><rect x="2.6" y="11.8" width="11.6" height="1.7" fill="#e0e4b0"/><rect x="14.6" y="9.4" width="1.8" height="1.4" fill="#30d060"/></g>
<!-- cut -->
<g transform="translate(148,697)"><path d="M-4.6,0 L2.6,12.6 M4.6,0 L-2.6,12.6" stroke="#2c303c" stroke-width="1.4" fill="none"/><circle cx="-3.6" cy="15" r="3" fill="#3a66e0" stroke="#142a90" stroke-width="1"/><circle cx="3.6" cy="15" r="3" fill="#3a66e0" stroke="#142a90" stroke-width="1"/><circle cx="-3.6" cy="15" r="1" fill="#b0c4ff"/><circle cx="3.6" cy="15" r="1" fill="#b0c4ff"/></g>
<!-- copy -->
<g transform="translate(165,697)"><path d="M0.5,0.5 H7.5 L10.5,3.5 V13.5 H0.5 Z" fill="#fafaff" stroke="#383c48" stroke-width="0.9"/><path d="M2,4 H8 M2,6 H8 M2,8 H6" stroke="#8a8a98" stroke-width="0.8"/><path d="M6.5,5.5 H14 L17.5,9 V18.5 H6.5 Z" fill="#fafaff" stroke="#20242c" stroke-width="1"/><path d="M8.5,9.5 H15.5 M8.5,11.5 H15.5 M8.5,13.5 H15.5 M8.5,15.5 H15.5" stroke="#2a3cb8" stroke-width="1"/><path d="M14,5.5 V9 H17.5" fill="none" stroke="#20242c" stroke-width="0.7"/></g>
<!-- paste -->
<g transform="translate(190,697.5)"><rect x="0.6" y="2.2" width="13" height="13.4" rx="1.2" fill="#9aa43a" stroke="#2c3010" stroke-width="1.1"/><rect x="2.4" y="4.4" width="9.4" height="9.4" fill="#b8c060"/><path d="M4,2.6 Q4,0.4 7,0.4 Q10,0.4 10,2.6 V3.6 H4 Z" fill="#f0d040" stroke="#50440c" stroke-width="0.7"/><path d="M8.5,9 H15 L17.6,11.6 V17.4 H8.5 Z" fill="#fafaff" stroke="#181c30" stroke-width="1"/><path d="M10,12 H16 M10,13.8 H16 M10,15.6 H16" stroke="#2a3cb8" stroke-width="0.9"/></g>
<!-- undo -->
<g transform="translate(217,698.5)"><path d="M0.6,3.2 L1.2,10.2 L7.8,8.8 L5.6,7 Q9.4,3.4 11.6,6.6 Q13,9.6 10,13.6 L13,13.4 Q17.6,8.6 14.8,3.6 Q10.6,-1.6 3.4,4.8 Z" fill="#34c87c" stroke="#0c5838" stroke-width="0.9" stroke-linejoin="round"/></g>
<use href="#dd" x="236.5" y="716.8"/>
<!-- redo (disabled) -->
<g transform="translate(261,698.5) scale(-1,1)"><path d="M0.6,3.2 L1.2,10.2 L7.8,8.8 L5.6,7 Q9.4,3.4 11.6,6.6 Q13,9.6 10,13.6 L13,13.4 Q17.6,8.6 14.8,3.6 Q10.6,-1.6 3.4,4.8 Z" fill="#d4d4e6" stroke="#f6f6ff" stroke-width="1" stroke-linejoin="round"/><path d="M1.6,10.6 L8,9.2 M10.4,14 L13.4,13.8 Q18,8.8 15.2,4" fill="none" stroke="#a4a4bc" stroke-width="0.8"/></g>
<use href="#dd" x="264" y="716.8"/>
<!-- what's this -->
<g transform="translate(271,698.5)"><path d="M0.8,0.6 L0.8,12.4 L3.8,9.8 L6,15 L8.4,14 L6.2,9 L10,8.8 Z" fill="#f0e060" stroke="#181820" stroke-width="0.9" stroke-linejoin="round"/><text x="7.6" y="14.2" font-family="Liberation Sans, sans-serif" font-weight="bold" font-size="18.5" fill="#101858">?</text></g>
<!-- f(x) -->
<g transform="translate(313,697.5)" fill="#0a0a12" font-family="Liberation Serif, serif"><text x="0.6" y="13.4" font-size="18.5" font-style="italic" font-weight="bold">f</text><text x="8.6" y="14.4" font-size="9" font-family="Liberation Sans, sans-serif" font-weight="bold">(x)</text></g>
<!-- speech bubble -->
<g transform="translate(339,697)"><path d="M9.5,1 Q17.6,1 17.6,7.2 Q17.6,13 9.8,13.4 L6.4,13.2 L1,18 L3.4,12.2 Q0.8,10.6 0.8,7.2 Q0.8,1 9.5,1 Z" fill="#f8f8ff" stroke="#08080c" stroke-width="1.7" stroke-linejoin="round"/><ellipse cx="9.4" cy="7.2" rx="5.2" ry="3.6" fill="#9c9cac"/><path d="M6,6.2 H12.6 M6.4,8.2 H12.2" stroke="#f0f0f8" stroke-width="0.9"/></g>
<!-- chain disabled -->
<g transform="translate(371,699)" fill="none" stroke="#a8a8be" stroke-width="1.4"><ellipse cx="0" cy="3" rx="2.6" ry="3.2" fill="#e4e4f2"/><ellipse cx="0" cy="10.5" rx="2.6" ry="3.4" fill="#e4e4f2"/><path d="M0,5 V9" stroke="#f8f8ff" stroke-width="1.6"/></g>
<!-- design table -->
<g transform="translate(386,697.5)"><rect x="0" y="0" width="15" height="15" fill="#0c0c24"/><rect x="0" y="0" width="15" height="3.6" fill="#1a1ab8"/><g fill="#fafaff"><rect x="1.1" y="4.8" width="2.5" height="2.2"/><rect x="4.6" y="4.8" width="2.5" height="2.2"/><rect x="8.1" y="4.8" width="2.5" height="2.2"/><rect x="11.6" y="4.8" width="2.5" height="2.2"/><rect x="1.1" y="8.2" width="2.5" height="2.2"/><rect x="4.6" y="8.2" width="2.5" height="2.2"/><rect x="8.1" y="8.2" width="2.5" height="2.2"/><rect x="11.6" y="8.2" width="2.5" height="2.2"/><rect x="1.1" y="11.6" width="2.5" height="2.2"/><rect x="4.6" y="11.6" width="2.5" height="2.2"/><rect x="8.1" y="11.6" width="2.5" height="2.2"/><rect x="11.6" y="11.6" width="2.5" height="2.2"/></g></g>
<use href="#dd" x="404.8" y="716.8"/>
<!-- knowledge tree -->
<g transform="translate(411,697)"><g fill="#f4f8ff" stroke="#2050d8" stroke-width="1.3"><rect x="15" y="0.8" width="3.6" height="3.6"/><rect x="15" y="8.6" width="3.6" height="3.6"/><rect x="15" y="15" width="3.6" height="2.8"/></g><rect x="0.8" y="8" width="3" height="5.2" fill="#e8fff0" stroke="#186838" stroke-width="1.2"/><path d="M5,10.4 H13.4 M6,7.6 L12.6,1.6" stroke="#0a0a12" stroke-width="1.2" fill="none"/><path d="M5,10.4 L7.4,8.6 V12.2 Z M13.4,1 L13,4 L10.6,1.6 Z M6,7.6 L6.4,4.8 L8.6,7 Z" fill="#0a0a12"/><circle cx="11.6" cy="6" r="1.1" fill="#d81020"/><circle cx="11.6" cy="14.8" r="1.1" fill="#d81020"/><rect x="4.6" y="8.6" width="2.4" height="2" fill="#60e0f0"/></g>
<!-- lock -->
<g transform="translate(440,695)"><path d="M3.4,8 V5 Q3.4,0.8 7,0.8 Q10.6,0.8 10.6,5 V8" fill="none" stroke="#50505c" stroke-width="2.2"/><path d="M3.4,8 V5 Q3.4,0.8 7,0.8 Q10.6,0.8 10.6,5 V8" fill="none" stroke="#b4b4c0" stroke-width="0.9"/><path d="M0.6,9 L2.4,7.4 H12 L13.6,9 V17 L12,18.6 H2.4 L0.6,17 Z" fill="#8c8c98" stroke="#3c3c48" stroke-width="1"/><path d="M2,9.4 H9 V17.4 H2 Z" fill="#a8a8b4"/><rect x="6" y="11.4" width="2.4" height="3.6" fill="#181820"/></g>
<use href="#dd" x="457.6" y="716.8"/>
<!-- catalog -->
<g transform="translate(464,696.5)"><rect x="0.5" y="0.6" width="7.4" height="7" fill="#28a890" stroke="#585820" stroke-width="0.8"/><rect x="0.9" y="1" width="6.6" height="2" fill="#e8d848"/><rect x="1.8" y="4" width="3.6" height="2.4" fill="#40d8e8"/><rect x="0.5" y="9.2" width="7.4" height="7" fill="#28a890" stroke="#585820" stroke-width="0.8"/><rect x="0.9" y="9.6" width="6.6" height="2" fill="#e8d848"/><rect x="1.8" y="12.6" width="3.6" height="2.4" fill="#40d8e8"/><path d="M1,18.4 H2.4 M3.6,18.4 H5 M6.2,18.4 H7.6" stroke="#303038" stroke-width="1.1"/><path d="M9.2,0.4 Q11,0.6 10.8,3.6 Q10.4,8.6 12.8,9.2 Q10.4,9.8 10.8,14.6 Q11,18 9.2,18.4" fill="none" stroke="#0a0a12" stroke-width="1.3"/><path d="M14.2,7.8 H18.4 M14.2,10.6 H18.4" stroke="#0a0a12" stroke-width="1.3"/></g>
<!-- fly -->
<g transform="translate(507,698.5)"><path d="M1,3.4 L3.4,2.4 L7,6.2 L12.6,4.2 Q15.4,3.6 14.4,6 L13.2,8 L17.6,12.4 L16.4,14 L10.8,11 L5.6,14.6 L3,15 L6.4,10.6 L4.2,8.6 L1.6,8 L3.4,6.6 Z" fill="#48d4e8" stroke="#103c90" stroke-width="1" stroke-linejoin="round"/><path d="M2,1 L4,0.4 M1,5.4 L0.2,3.8" stroke="#103c90" stroke-width="0.9"/></g>
<!-- fit all -->
<g transform="translate(532.5,697.5)"><rect x="0.8" y="0.8" width="16" height="16" fill="#f2ee84" stroke="#2a9c9c" stroke-width="1.6"/><path d="M8.8,3 V14.6 M3,8.8 H14.6" stroke="#08080c" stroke-width="1.2"/><path d="M8.8,1.8 L6.6,4.8 H11 Z M8.8,15.8 L6.6,12.8 H11 Z M1.8,8.8 L4.8,6.6 V11 Z M15.8,8.8 L12.8,6.6 V11 Z" fill="#08080c"/></g>
<!-- pan -->
<g transform="translate(566.5,705.5)" fill="#101c6c"><path d="M0,-8.6 L-3.6,-4.4 H-1.3 V-1.3 H-4.4 V-3.6 L-8.6,0 L-4.4,3.6 V1.3 H-1.3 V4.4 H-3.6 L0,8.6 L3.6,4.4 H1.3 V1.3 H4.4 V3.6 L8.6,0 L4.4,-3.6 V-1.3 H1.3 V-4.4 H3.6 Z"/><circle r="2.2"/><circle r="0.9" fill="#6a7cd0"/></g>
<!-- rotate -->
<g transform="translate(583,699.5)"><path d="M0.8,4.6 L3,3.6 L9.4,1 Q14.6,0.4 17.4,4.4 Q18.8,7 17,9 L13.6,8 L8.6,9.6 L3.4,9.6 L0.8,10.4 Z" fill="#f2c8a4" stroke="#181828" stroke-width="1" stroke-linejoin="round"/><path d="M8,4.6 Q11.6,3.4 14,5.2" fill="none" stroke="#7c4c30" stroke-width="0.9"/><rect x="0.4" y="4.2" width="2.4" height="6.8" fill="#1c2c80"/><ellipse cx="12.4" cy="11.4" rx="4.6" ry="3.4" fill="#3868e4" stroke="#102078" stroke-width="0.8"/><ellipse cx="11.4" cy="10.6" rx="1.8" ry="1.1" fill="#8cb4ff"/></g>
<!-- zoom in -->
<g id="zin" transform="translate(609,697)"><path d="M10.4,10.4 L17,17.4" stroke="#101c58" stroke-width="3.4" stroke-linecap="round"/><path d="M10.8,10.8 L16.8,17.2" stroke="#9cc0f0" stroke-width="1.3" stroke-linecap="round"/><circle cx="6.6" cy="6.4" r="5.6" fill="#f2fbff" stroke="#101c58" stroke-width="1.5"/><path d="M3.6,6.4 H9.6 M6.6,3.4 V9.4" stroke="#08080c" stroke-width="1.7"/></g>
<!-- zoom out -->
<g transform="translate(634.6,697)"><path d="M10.4,10.4 L17,17.4" stroke="#101c58" stroke-width="3.4" stroke-linecap="round"/><path d="M10.8,10.8 L16.8,17.2" stroke="#9cc0f0" stroke-width="1.3" stroke-linecap="round"/><circle cx="6.6" cy="6.4" r="5.6" fill="#f2fbff" stroke="#101c58" stroke-width="1.5"/><path d="M3.6,6.4 H9.6" stroke="#08080c" stroke-width="1.7"/></g>
<!-- normal view -->
<g transform="translate(660,697)"><path d="M0.8,17.4 L6.4,10.4 H18.4 L12.4,17.4 Z" fill="#34b4c8" stroke="#0c3454" stroke-width="1.1" stroke-linejoin="round"/><path d="M9.6,13.4 V4.6" stroke="#e89040" stroke-width="1.3"/><path d="M9.6,0.6 L5.6,5 H13.6 Z" fill="#f2f2ff" stroke="#281878" stroke-width="1.3" stroke-linejoin="round"/><circle cx="9.6" cy="13.6" r="0.9" fill="#101020"/></g>
<!-- multi view -->
<g transform="translate(686,697.5)"><rect x="1.6" y="1.6" width="15" height="15" fill="#5c5ca0" opacity="0.7"/><rect x="0.6" y="0.6" width="14.6" height="14.6" fill="#38dcff" stroke="#1c54e0" stroke-width="1.2"/><rect x="8" y="0.8" width="7" height="7" fill="#9478e8"/><path d="M7.9,0.6 V15.2 M0.6,7.9 H15.2" stroke="#1c54e0" stroke-width="1.2"/></g>
<!-- iso cube -->
<g transform="translate(710.6,696)"><path d="M0.8,6.8 L6.4,0.8 H18 V12.4 L12.4,18.2 H0.8 Z" fill="#44e0ff" stroke="#1030b0" stroke-width="1.2" stroke-linejoin="round"/><path d="M0.8,6.8 H12.4 V18.2 M12.4,6.8 L18,0.8" fill="none" stroke="#1030b0" stroke-width="1.2"/><path d="M12.4,6.8 L18,0.8 V12.4 L12.4,18.2 Z" fill="#30c4f0" opacity="0.6"/></g>
<use href="#dd" x="731.6" y="716.8"/>
<!-- shading cylinder -->
<g transform="translate(740,695.6)"><path d="M0.8,4.4 Q0.8,0.8 7.6,0.8 Q14.4,0.8 14.4,4.4 V15.2 Q14.4,19 7.6,19 Q0.8,19 0.8,15.2 Z" fill="#e8e878" stroke="#8c8c18" stroke-width="1.3"/><path d="M3,4.6 H12.4 V16.4 H3 Z" fill="#101468"/><rect x="3" y="2.6" width="9.4" height="2.4" fill="#5c8cf0"/><rect x="3" y="5.6" width="4.4" height="11" fill="#a8e878"/><rect x="4.6" y="5.6" width="1.6" height="11" fill="#f4f4f4"/><path d="M1.6,4.4 Q7.6,7.4 13.6,4.4" fill="none" stroke="#14141c" stroke-width="0.9"/><path d="M2.4,3 V16.4 M12.8,3 V16.4" stroke="#14141c" stroke-width="0.9"/></g>
<rect x="754.6" y="713.6" width="8" height="6.4" fill="#f0f0fa"/>
<use href="#dd" x="758.6" y="716.8"/>
<!-- hide/show -->
<g transform="translate(766,697.5)"><rect x="0.7" y="0.7" width="15.8" height="15.8" fill="#58d8f0" stroke="#101c58" stroke-width="1.3"/><path d="M7.6,4 L11,2 L15,3.6 L11.6,6 Z" fill="#f0e890" stroke="#68682c" stroke-width="0.7"/><path d="M7.6,4 L11.6,6 V8 L7.6,6 Z" fill="#b0c478" stroke="#68682c" stroke-width="0.6"/><path d="M2,11.4 L6.4,8.4 L12,10.8 L7.6,13.8 Z" fill="#fafaff" stroke="#141424" stroke-width="0.8"/><path d="M2,11.4 L7.6,13.8 V15.4 L2,13 Z M7.6,13.8 L12,10.8 V12.4 L7.6,15.4 Z" fill="#1c7c8c" stroke="#141424" stroke-width="0.7"/></g>
<!-- swap visible -->
<g transform="translate(792,697.5)"><rect x="0.7" y="0.7" width="15.8" height="15.8" fill="#58d8f0" stroke="#101c58" stroke-width="1.3"/><path d="M2.4,11 L6.8,8 L12.6,10.4 L8.2,13.4 Z" fill="#f8f4c8" stroke="#141424" stroke-width="0.8"/><path d="M2.4,11 L8.2,13.4 V15.2 L2.4,12.8 Z M8.2,13.4 L12.6,10.4 V12.2 L8.2,15.2 Z" fill="#1c7c8c" stroke="#141424" stroke-width="0.7"/></g>
<!-- ball/box arrow -->
<g transform="translate(833.6,695.6)"><circle cx="3.4" cy="3.6" r="3" fill="#2c8cc8"/><circle cx="2.6" cy="2.8" r="1.3" fill="#8ce8f0"/><path d="M7.4,1.6 Q12.6,0.4 14.6,5.4" fill="none" stroke="#1c34c0" stroke-width="1.3" stroke-dasharray="1.6 1"/><path d="M12.4,5 L15,8.6 L16.8,4.4 Z" fill="#1c34c0"/><path d="M1.4,12.6 L4.4,9.8 H16.4 V15.6 L13.4,18.6 H1.4 Z" fill="#e8e8f4" stroke="#14141c" stroke-width="1.1" stroke-linejoin="round"/><path d="M1.4,12.6 H13.4 V18.6 M13.4,12.6 L16.4,9.8" fill="none" stroke="#14141c" stroke-width="1"/><path d="M4.6,14 H11 V16.4" fill="none" stroke="#78788c" stroke-width="0.9"/></g>
<!-- measure between -->
<g transform="translate(876,697)"><path d="M2.4,3.6 H16" stroke="#1424a4" stroke-width="1.4"/><path d="M0.4,3.6 L4.6,0.4 M0.4,3.6 L4.6,6.8 M18,3.6 L13.8,0.4 M18,3.6 L13.8,6.8" stroke="#1424a4" stroke-width="1.4" fill="none" stroke-linecap="round"/><rect x="1.2" y="10" width="16.4" height="5.4" fill="#f8ccc4" stroke="#1c2ca8" stroke-width="1.1"/><path d="M3.4,10.4 V12.6 M5.6,10.4 V12 M7.8,10.4 V12.6 M10,10.4 V12 M12.2,10.4 V12.6 M14.4,10.4 V12" stroke="#a03030" stroke-width="0.8"/><rect x="1" y="15.8" width="16.8" height="1.2" fill="#7cd8f0" opacity="0.7"/></g>
<!-- measure item -->
<g transform="translate(904.4,695.6)"><path d="M4.4,0.8 H13.4 V13.4 H14.2 V15.6 H12.6 V18.6 H9.6 V15.6 H2.4 V12.4 H9 V3.6 H4.4 Z" fill="#50505c" stroke="#20202c" stroke-width="0.8" stroke-linejoin="round"/><rect x="10" y="1.6" width="2.2" height="11.4" fill="#80808c"/><circle cx="4.6" cy="8" r="3.4" fill="#3c8c9c" stroke="#183c48" stroke-width="0.6"/><circle cx="3.8" cy="7.2" r="1.5" fill="#b8ecf0"/></g>
<!-- inertia weight -->
<g transform="translate(930.6,695.6)"><circle cx="5" cy="3.2" r="2.2" fill="#f4f4f8" stroke="#20200c" stroke-width="1.3"/><path d="M0.6,7.8 Q0.6,6 5,6 Q9.4,6 9.4,7.8 V16.2 Q9.4,18.2 5,18.2 Q0.6,18.2 0.6,16.2 Z" fill="#c8b834" stroke="#3c340c" stroke-width="1.1"/><path d="M0.6,7.8 Q5,10 9.4,7.8" fill="none" stroke="#3c340c" stroke-width="0.8"/><rect x="2" y="9.4" width="1.6" height="7.4" fill="#ece48c" opacity="0.8"/></g>
<!-- camera -->
<g transform="translate(970,698)"><path d="M0.6,4.6 Q0.6,3.4 1.8,3.4 H4.6 L5.8,1 H11.6 L12.8,3.4 H17.2 Q18.4,3.4 18.4,4.6 V11.4 Q18.4,12.6 17.2,12.6 H1.8 Q0.6,12.6 0.6,11.4 Z" fill="#20202c" stroke="#08080c" stroke-width="0.8"/><rect x="0.8" y="5.2" width="17.4" height="1.5" fill="#c0c0cc"/><circle cx="9" cy="8.8" r="4.2" fill="#14141c" stroke="#d0d0dc" stroke-width="1"/><circle cx="9" cy="8.8" r="1.8" fill="#50506c"/><rect x="14" y="1.8" width="2.8" height="1.6" fill="#20202c"/><rect x="6.6" y="0.2" width="4" height="1.4" fill="#9090a0"/></g>
<!-- swirl disabled -->
<g transform="translate(1013,697.5)"><path d="M4,0.8 H14 L17.4,4.2 V13.6 L14,17 H4 L0.8,13.6 V4.2 Z" fill="#aaaab8" stroke="#f4f4fc" stroke-width="0.9"/><path d="M4.4,10.6 Q3.4,5.4 8.2,5 Q11.4,5 10.6,8.4 Q10,10.8 12.6,10.6 Q15,10 14,6.4" fill="none" stroke="#e4e4f0" stroke-width="2.2" stroke-linecap="round"/><path d="M13.8,7.2 Q15.4,12.6 10.2,13 Q6.8,13 7.4,9.8" fill="none" stroke="#e4e4f0" stroke-width="2.2" stroke-linecap="round"/></g>
<!-- hand globe -->
<g transform="translate(1038,697)"><circle cx="9.4" cy="9.4" r="8.8" fill="#0c143c"/><path d="M9.4,1.6 A7.8,7.8 0 0 1 17.2,9.4 L9.4,9.4 Z" fill="#e8e4b4"/><path d="M3.6,5 A7.2,7.2 0 0 0 5.4,15.6" fill="none" stroke="#2c5cc0" stroke-width="1.6"/><path transform="translate(-1.6,-1)" d="M7.4,11 L5.6,9 Q4.4,8.8 5,10.4 L8,15.4 Q9.4,18.4 12,18.4 L14.6,18.2 Q16.8,16.4 16.8,13 L17,9.6 Q16.4,8.4 15.4,9.2 L15.2,8 Q14.2,7.2 13.4,8.2 L13.2,7.4 Q12.2,6.6 11.4,7.6 L11.2,3.4 Q10.2,2 9.2,3.4 L9.2,11 Z" fill="#fafaff" stroke="#10101c" stroke-width="0.8" stroke-linejoin="round"/></g>
<!-- axis -->
<g transform="translate(1064,697)" stroke="#0a0a12" stroke-width="1.5" fill="#0a0a12"><path d="M7.4,12 V2.4 M7.4,12 H15.4 M7.4,12 L1.6,17.6" fill="none"/><path d="M7.4,0 L5.2,3.6 H9.6 Z M17.8,12 L14.2,9.8 V14.2 Z M0.4,18.6 L1,15.2 L3.8,18 Z" stroke="none"/></g>
<!-- 10.1 10.0 -->
<g font-family="Liberation Sans, sans-serif" font-weight="bold" font-size="10.6" letter-spacing="-0.4"><text x="1088.6" y="705.4" fill="#0a0a12">10.1</text><text x="1088.6" y="714" fill="#101468">10.0</text></g>
<!-- blue cylinder -->
<g transform="translate(1115.6,695.6)"><path d="M3,3.4 Q3,0.8 8.8,0.8 Q14.6,0.8 14.6,3.4 V16 Q14.6,18.8 8.8,18.8 Q3,18.8 3,16 Z" fill="#44e0e8" stroke="#0c2c38" stroke-width="1.3"/><path d="M3,3.6 Q8.8,6.4 14.6,3.6 M3,15.6 Q8.8,18.2 14.6,15.6" fill="none" stroke="#0c2c38" stroke-width="1"/><path d="M0.6,6.4 H5 M0.6,13.6 H5 M12.6,6.4 H17 M12.6,13.6 H17" stroke="#0c2c38" stroke-width="1.1"/><path d="M4.4,6.4 V13.6 M13.2,6.4 V13.6" stroke="#1c8ca0" stroke-width="0.9"/></g>
<use href="#dd" x="1135.4" y="716.8"/>
<!-- tree w/ bolt -->
<g transform="translate(1142,698.6)"><rect x="0.8" y="1" width="6.4" height="3" fill="#dce8ff" stroke="#2040c0" stroke-width="1.2"/><rect x="11.8" y="10.6" width="6.4" height="3" fill="#dce8ff" stroke="#2040c0" stroke-width="1.2"/><path d="M4,4.6 V8 Q4,12 8,12 H11.4" fill="none" stroke="#182060" stroke-width="1.3"/><path d="M11.4,5.6 L6,11.2 L9,11.2 L4.8,16.6 L12.4,10 L9.2,10 Z" fill="#e01828"/></g>
<!-- list -->
<g transform="translate(1171.6,697)" fill="#eef0ff" stroke="#2434c4" stroke-width="1.3"><rect x="0.8" y="0.8" width="7.6" height="2.8"/><rect x="0.8" y="7" width="7.6" height="2.8"/><rect x="0.8" y="13.2" width="7.6" height="2.8"/></g>
<use href="#dd" x="1188.4" y="716.8"/>
<!-- chevrons -->
<path d="M1201,693.4 L1203.6,696.2 L1201,699 M1204.6,693.4 L1207.2,696.2 L1204.6,699" fill="none" stroke="#f6f6ff" stroke-width="1"/>
<path d="M1201.6,693.8 L1204.2,696.6 L1201.6,699.4 M1205.2,693.8 L1207.8,696.6 L1205.2,699.4" fill="none" stroke="#a4a4bc" stroke-width="0.6"/>
<!-- CATIA logo -->
<g>
<path d="M1226,689.6 Q1231.6,688.4 1231,691.4 Q1230.4,693.6 1227.4,694.2 Q1231.2,694.4 1230.2,697.4" fill="none" stroke="#d82838" stroke-width="1.3" stroke-linecap="round"/>
<path d="M1222.8,696.4 Q1230.8,694.6 1230.4,699.2 Q1229.6,704.6 1216.4,708.4 L1221.6,698.2" fill="none" stroke="#2c2484" stroke-width="1.7" stroke-linecap="round" stroke-linejoin="round"/>
<path d="M1238.6,696.6 Q1232.6,696.2 1232.6,699.6 Q1233,701.8 1236,702.6 Q1238.6,703.6 1237.4,706 Q1235.4,708.2 1229.4,707.4" fill="none" stroke="#e0a444" stroke-width="1.8" stroke-linecap="round"/>
<text x="1223" y="715.6" font-family="Liberation Sans, sans-serif" font-weight="bold" font-style="italic" font-size="8.3" fill="#24207c" letter-spacing="0.5">CATIA</text>
</g>
</g>

</svg>

</body></html>
